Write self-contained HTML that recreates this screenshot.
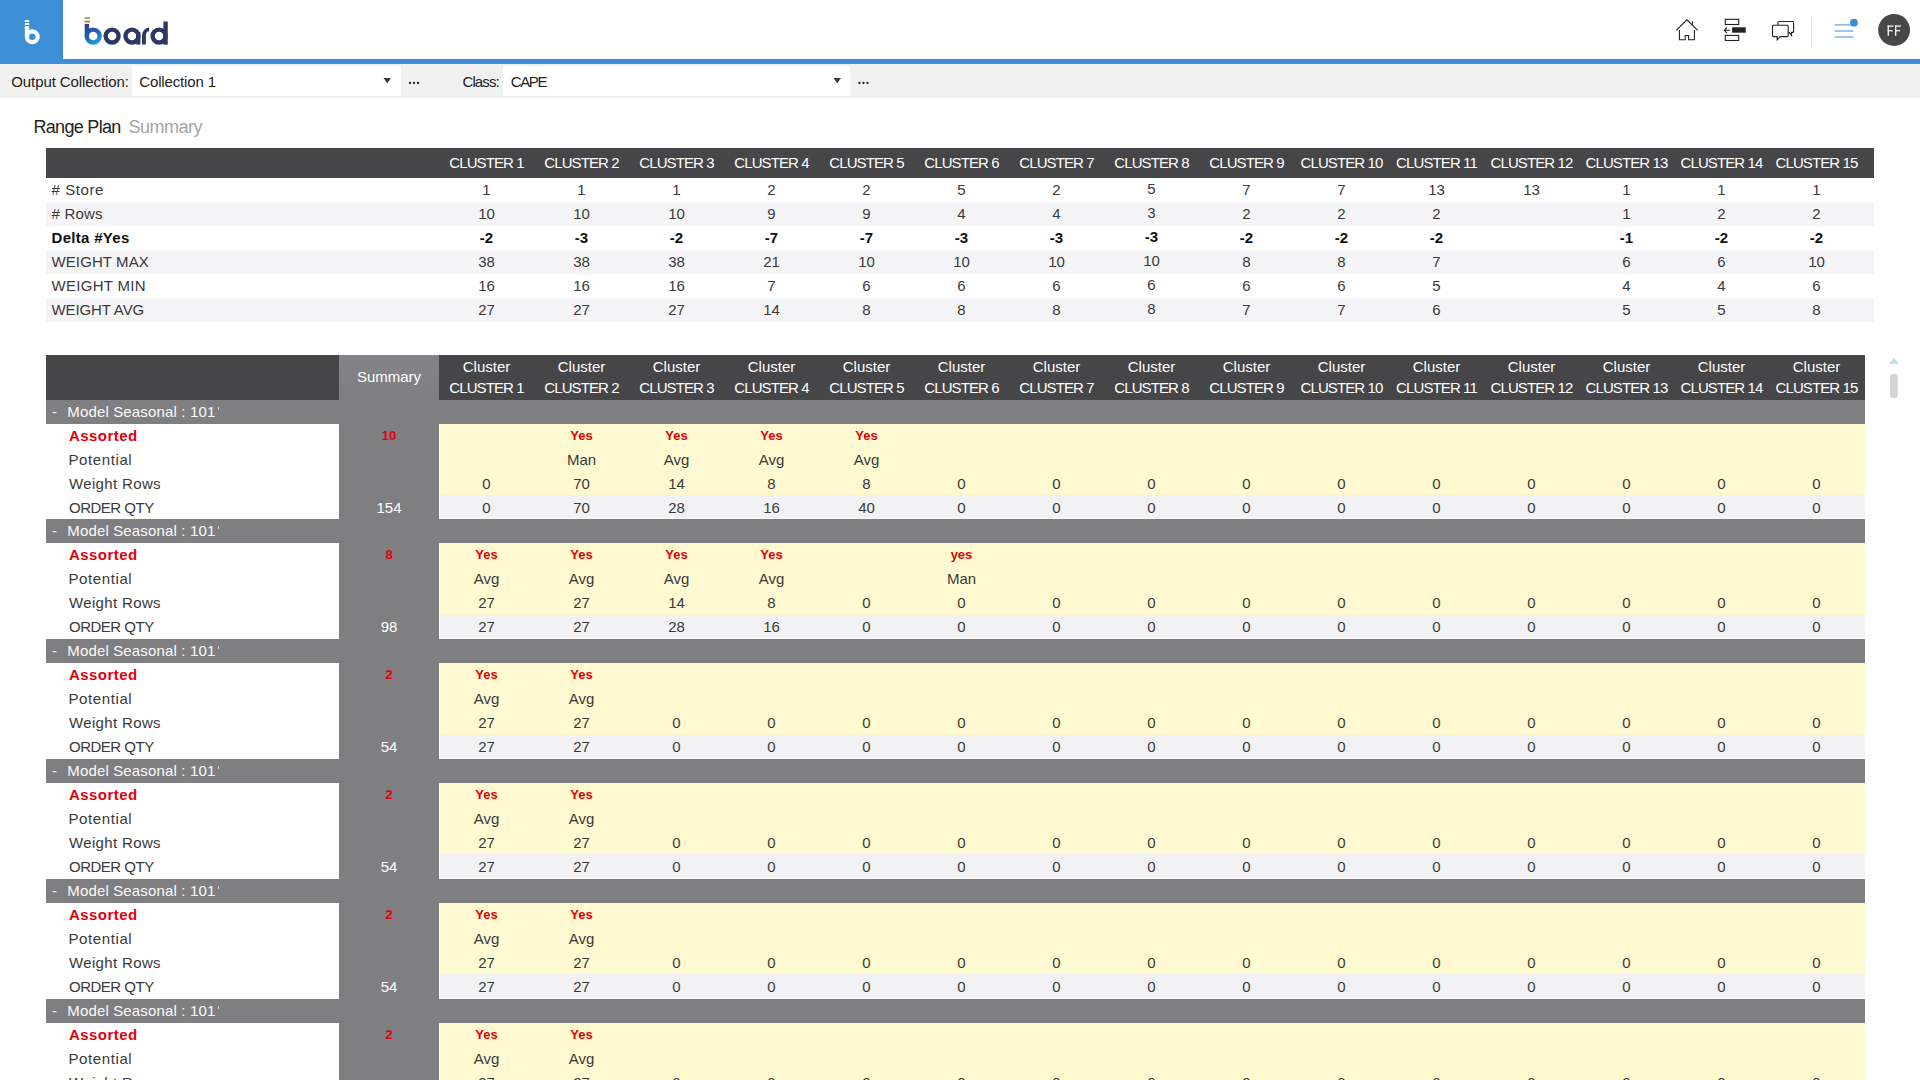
<!DOCTYPE html>
<html><head><meta charset="utf-8"><title>Range Plan Summary</title>
<style>
html,body{margin:0;padding:0;width:1920px;height:1080px;overflow:hidden;background:#fff;}
body{position:relative;font-family:"Liberation Sans", sans-serif;}
body>div,body>svg{position:absolute;box-sizing:border-box;}
.t{white-space:nowrap;}
</style></head><body>
<div style="left:0px;top:0px;width:1920px;height:59px;background:#ffffff;"></div><div style="left:0px;top:0px;width:63px;height:59px;background:#3d8fd5;"></div><div style="left:0px;top:59px;width:1920px;height:5px;background:#3d8fd5;"></div><svg style="left:0;top:0" width="63" height="59" viewBox="0 0 63 59">
<rect x="24.8" y="20" width="4.3" height="2" fill="#fff"/>
<rect x="24.8" y="23" width="4.3" height="2" fill="#fff"/>
<rect x="24.8" y="26" width="4.3" height="11" fill="#fff"/>
<circle cx="32.3" cy="36.8" r="5.4" fill="none" stroke="#fff" stroke-width="4.2"/>
</svg><svg style="left:60px;top:0" width="130" height="59" viewBox="60 0 130 59">
<defs><linearGradient id="bg1" gradientUnits="userSpaceOnUse" x1="86" y1="24" x2="99" y2="45"><stop offset="0" stop-color="#2b3a92"/><stop offset="0.55" stop-color="#2168b8"/><stop offset="1" stop-color="#1db6ec"/></linearGradient></defs>
<rect x="84.5" y="17.1" width="5.4" height="1.9" fill="#7fbc4f"/>
<rect x="84.5" y="20.6" width="5.4" height="1.9" fill="#e8624f"/>
<g fill="url(#bg1)"><rect x="84.7" y="23.9" width="4.4" height="12.3"/></g>
<circle cx="93.2" cy="36.1" r="6.45" fill="none" stroke="url(#bg1)" stroke-width="4.4"/>
<g fill="#2e3763">
<rect x="136.2" y="32" width="4.2" height="12.6"/>
<path d="M142 44.6 V36.1 A7.1 8.6 0 0 1 149.1 27.5 V31.3 A3.2 4.8 0 0 0 145.9 36.1 V44.6 Z"/>
<rect x="163.4" y="21.5" width="4.35" height="23.2"/>
</g>
<g fill="none" stroke="#2e3763" stroke-width="4.4">
<circle cx="112.1" cy="36.1" r="6.45"/>
<circle cx="131.95" cy="36.1" r="6.45"/>
<circle cx="159.05" cy="36.1" r="6.45"/>
</g>
</svg><svg style="left:1660px;top:0" width="260" height="59" viewBox="1660 0 260 59">
<g fill="none" stroke="#222" stroke-width="1.1">
<path d="M1676.3 30.4 L1686.9 19.8 L1697.7 30.4"/>
<path d="M1692.4 21.2 V24.8"/>
<path d="M1679.4 30 V39.8 H1685.2 V35.5 H1688.6 V39.8 H1694.4 V30"/>
<rect x="1725.3" y="19.3" width="13.4" height="5.2"/>
<rect x="1725.3" y="35.4" width="13.4" height="5.1"/>
<path d="M1724.5 30.3 H1730 M1727 27.5 L1724.3 30.3 L1727 33.1"/>
<path d="M1778 25 V22.5 Q1778 21.5 1779 21.5 H1792.6 Q1793.6 21.5 1793.6 22.5 V31.4 Q1793.6 32.4 1792.6 32.4 H1791.6 V35.5 L1789 32.4 H1788.2"/>
<path d="M1773.5 25.2 H1787.2 Q1788.2 25.2 1788.2 26.2 V35.6 Q1788.2 36.6 1787.2 36.6 H1780.2 L1777.2 39.8 V36.6 H1773.5 Q1772.5 36.6 1772.5 35.6 V26.2 Q1772.5 25.2 1773.5 25.2 Z"/>
</g>
<rect x="1732.1" y="27.3" width="13.6" height="5.4" fill="#222"/>
<rect x="1811" y="17.5" width="1" height="30.5" fill="#e2e2e2"/>
<g fill="#8fbde2"><rect x="1834.6" y="24" width="18.7" height="1.7"/><rect x="1834.6" y="30.2" width="18.7" height="1.7"/><rect x="1834.6" y="36.1" width="18.7" height="1.7"/></g>
<circle cx="1854" cy="22.7" r="3.9" fill="#3d8fd5"/>
<circle cx="1894.1" cy="30" r="15.9" fill="#474747"/>
</svg><svg style="left:1880px;top:20px" width="28" height="20" viewBox="1880 20 28 20"><g fill="#f4f4f4"><rect x="1887.6" y="25.4" width="1.35" height="10.4"/><rect x="1887.6" y="25.4" width="5.9" height="1.3"/><rect x="1887.6" y="30.1" width="5.2" height="1.25"/><rect x="1895" y="25.4" width="1.35" height="10.4"/><rect x="1895" y="25.4" width="5.9" height="1.3"/><rect x="1895" y="30.1" width="5.2" height="1.25"/></g></svg><div style="left:0px;top:64px;width:1920px;height:34px;background:#f1f1f2;"></div><div class="t" style="left:11.3px;top:70px;width:130px;height:24px;line-height:24px;font-size:15px;color:#222;font-weight:400;text-align:left;letter-spacing:-0.1px;">Output Collection:</div><div style="left:132px;top:66px;width:269px;height:30px;background:#ffffff;"></div><div class="t" style="left:139.3px;top:70px;width:200px;height:24px;line-height:24px;font-size:15px;color:#222;font-weight:400;text-align:left;letter-spacing:-0.15px;">Collection 1</div><svg style="left:383px;top:77px" width="9" height="7" viewBox="0 0 9 7"><path d="M0.5 1 H8 L4.25 6.3 Z" fill="#3a3a3a"/></svg><svg style="left:405px;top:78px" width="20" height="10" viewBox="405 78 20 10"><circle cx="410" cy="83" r="1.15" fill="#222"/><circle cx="414" cy="83" r="1.15" fill="#222"/><circle cx="418" cy="83" r="1.15" fill="#222"/></svg><div class="t" style="left:462.5px;top:70px;width:40px;height:24px;line-height:24px;font-size:15px;color:#222;font-weight:400;text-align:left;letter-spacing:-0.9px;">Class:</div><div style="left:503px;top:66px;width:347px;height:30px;background:#ffffff;"></div><div class="t" style="left:510.8px;top:70px;width:100px;height:24px;line-height:24px;font-size:15px;color:#222;font-weight:400;text-align:left;letter-spacing:-1.4px;">CAPE</div><svg style="left:833px;top:77px" width="9" height="7" viewBox="0 0 9 7"><path d="M0.5 1 H8 L4.25 6.3 Z" fill="#3a3a3a"/></svg><svg style="left:855px;top:78px" width="20" height="10" viewBox="855 78 20 10"><circle cx="859.5" cy="83" r="1.15" fill="#222"/><circle cx="863.5" cy="83" r="1.15" fill="#222"/><circle cx="867.5" cy="83" r="1.15" fill="#222"/></svg><div class="t" style="left:33.5px;top:114.5px;width:200px;height:24px;line-height:24px;font-size:18px;color:#222;font-weight:400;text-align:left;letter-spacing:-0.7px;">Range Plan</div><div class="t" style="left:128.5px;top:114.5px;width:200px;height:24px;line-height:24px;font-size:18px;color:#a5a5a5;font-weight:400;text-align:left;letter-spacing:-0.5px;">Summary</div><div style="left:46px;top:148px;width:1828px;height:30px;background:#464547;"></div><div class="t" style="left:439px;top:148px;width:95px;height:30px;line-height:30px;font-size:15px;color:#ffffff;font-weight:400;text-align:center;letter-spacing:-0.9px;">CLUSTER 1</div><div class="t" style="left:534px;top:148px;width:95px;height:30px;line-height:30px;font-size:15px;color:#ffffff;font-weight:400;text-align:center;letter-spacing:-0.9px;">CLUSTER 2</div><div class="t" style="left:629px;top:148px;width:95px;height:30px;line-height:30px;font-size:15px;color:#ffffff;font-weight:400;text-align:center;letter-spacing:-0.9px;">CLUSTER 3</div><div class="t" style="left:724px;top:148px;width:95px;height:30px;line-height:30px;font-size:15px;color:#ffffff;font-weight:400;text-align:center;letter-spacing:-0.9px;">CLUSTER 4</div><div class="t" style="left:819px;top:148px;width:95px;height:30px;line-height:30px;font-size:15px;color:#ffffff;font-weight:400;text-align:center;letter-spacing:-0.9px;">CLUSTER 5</div><div class="t" style="left:914px;top:148px;width:95px;height:30px;line-height:30px;font-size:15px;color:#ffffff;font-weight:400;text-align:center;letter-spacing:-0.9px;">CLUSTER 6</div><div class="t" style="left:1009px;top:148px;width:95px;height:30px;line-height:30px;font-size:15px;color:#ffffff;font-weight:400;text-align:center;letter-spacing:-0.9px;">CLUSTER 7</div><div class="t" style="left:1104px;top:148px;width:95px;height:30px;line-height:30px;font-size:15px;color:#ffffff;font-weight:400;text-align:center;letter-spacing:-0.9px;">CLUSTER 8</div><div class="t" style="left:1199px;top:148px;width:95px;height:30px;line-height:30px;font-size:15px;color:#ffffff;font-weight:400;text-align:center;letter-spacing:-0.9px;">CLUSTER 9</div><div class="t" style="left:1294px;top:148px;width:95px;height:30px;line-height:30px;font-size:15px;color:#ffffff;font-weight:400;text-align:center;letter-spacing:-0.9px;">CLUSTER 10</div><div class="t" style="left:1389px;top:148px;width:95px;height:30px;line-height:30px;font-size:15px;color:#ffffff;font-weight:400;text-align:center;letter-spacing:-0.9px;">CLUSTER 11</div><div class="t" style="left:1484px;top:148px;width:95px;height:30px;line-height:30px;font-size:15px;color:#ffffff;font-weight:400;text-align:center;letter-spacing:-0.9px;">CLUSTER 12</div><div class="t" style="left:1579px;top:148px;width:95px;height:30px;line-height:30px;font-size:15px;color:#ffffff;font-weight:400;text-align:center;letter-spacing:-0.9px;">CLUSTER 13</div><div class="t" style="left:1674px;top:148px;width:95px;height:30px;line-height:30px;font-size:15px;color:#ffffff;font-weight:400;text-align:center;letter-spacing:-0.9px;">CLUSTER 14</div><div class="t" style="left:1769px;top:148px;width:95px;height:30px;line-height:30px;font-size:15px;color:#ffffff;font-weight:400;text-align:center;letter-spacing:-0.9px;">CLUSTER 15</div><div class="t" style="left:51.5px;top:178px;width:300px;height:24px;line-height:24px;font-size:15px;color:#3a3a3a;font-weight:400;text-align:left;letter-spacing:0.6px;"># Store</div><div class="t" style="left:439px;top:178px;width:95px;height:24px;line-height:24px;font-size:15px;color:#3a3a3a;font-weight:400;text-align:center;">1</div><div class="t" style="left:534px;top:178px;width:95px;height:24px;line-height:24px;font-size:15px;color:#3a3a3a;font-weight:400;text-align:center;">1</div><div class="t" style="left:629px;top:178px;width:95px;height:24px;line-height:24px;font-size:15px;color:#3a3a3a;font-weight:400;text-align:center;">1</div><div class="t" style="left:724px;top:178px;width:95px;height:24px;line-height:24px;font-size:15px;color:#3a3a3a;font-weight:400;text-align:center;">2</div><div class="t" style="left:819px;top:178px;width:95px;height:24px;line-height:24px;font-size:15px;color:#3a3a3a;font-weight:400;text-align:center;">2</div><div class="t" style="left:914px;top:178px;width:95px;height:24px;line-height:24px;font-size:15px;color:#3a3a3a;font-weight:400;text-align:center;">5</div><div class="t" style="left:1009px;top:178px;width:95px;height:24px;line-height:24px;font-size:15px;color:#3a3a3a;font-weight:400;text-align:center;">2</div><div class="t" style="left:1104px;top:177px;width:95px;height:24px;line-height:24px;font-size:15px;color:#3a3a3a;font-weight:400;text-align:center;">5</div><div class="t" style="left:1199px;top:178px;width:95px;height:24px;line-height:24px;font-size:15px;color:#3a3a3a;font-weight:400;text-align:center;">7</div><div class="t" style="left:1294px;top:178px;width:95px;height:24px;line-height:24px;font-size:15px;color:#3a3a3a;font-weight:400;text-align:center;">7</div><div class="t" style="left:1389px;top:178px;width:95px;height:24px;line-height:24px;font-size:15px;color:#3a3a3a;font-weight:400;text-align:center;">13</div><div class="t" style="left:1484px;top:178px;width:95px;height:24px;line-height:24px;font-size:15px;color:#3a3a3a;font-weight:400;text-align:center;">13</div><div class="t" style="left:1579px;top:178px;width:95px;height:24px;line-height:24px;font-size:15px;color:#3a3a3a;font-weight:400;text-align:center;">1</div><div class="t" style="left:1674px;top:178px;width:95px;height:24px;line-height:24px;font-size:15px;color:#3a3a3a;font-weight:400;text-align:center;">1</div><div class="t" style="left:1769px;top:178px;width:95px;height:24px;line-height:24px;font-size:15px;color:#3a3a3a;font-weight:400;text-align:center;">1</div><div style="left:46px;top:202px;width:1828px;height:24px;background:#f5f5f7;"></div><div class="t" style="left:51.5px;top:202px;width:300px;height:24px;line-height:24px;font-size:15px;color:#3a3a3a;font-weight:400;text-align:left;letter-spacing:0.2px;"># Rows</div><div class="t" style="left:439px;top:202px;width:95px;height:24px;line-height:24px;font-size:15px;color:#3a3a3a;font-weight:400;text-align:center;">10</div><div class="t" style="left:534px;top:202px;width:95px;height:24px;line-height:24px;font-size:15px;color:#3a3a3a;font-weight:400;text-align:center;">10</div><div class="t" style="left:629px;top:202px;width:95px;height:24px;line-height:24px;font-size:15px;color:#3a3a3a;font-weight:400;text-align:center;">10</div><div class="t" style="left:724px;top:202px;width:95px;height:24px;line-height:24px;font-size:15px;color:#3a3a3a;font-weight:400;text-align:center;">9</div><div class="t" style="left:819px;top:202px;width:95px;height:24px;line-height:24px;font-size:15px;color:#3a3a3a;font-weight:400;text-align:center;">9</div><div class="t" style="left:914px;top:202px;width:95px;height:24px;line-height:24px;font-size:15px;color:#3a3a3a;font-weight:400;text-align:center;">4</div><div class="t" style="left:1009px;top:202px;width:95px;height:24px;line-height:24px;font-size:15px;color:#3a3a3a;font-weight:400;text-align:center;">4</div><div class="t" style="left:1104px;top:201px;width:95px;height:24px;line-height:24px;font-size:15px;color:#3a3a3a;font-weight:400;text-align:center;">3</div><div class="t" style="left:1199px;top:202px;width:95px;height:24px;line-height:24px;font-size:15px;color:#3a3a3a;font-weight:400;text-align:center;">2</div><div class="t" style="left:1294px;top:202px;width:95px;height:24px;line-height:24px;font-size:15px;color:#3a3a3a;font-weight:400;text-align:center;">2</div><div class="t" style="left:1389px;top:202px;width:95px;height:24px;line-height:24px;font-size:15px;color:#3a3a3a;font-weight:400;text-align:center;">2</div><div class="t" style="left:1579px;top:202px;width:95px;height:24px;line-height:24px;font-size:15px;color:#3a3a3a;font-weight:400;text-align:center;">1</div><div class="t" style="left:1674px;top:202px;width:95px;height:24px;line-height:24px;font-size:15px;color:#3a3a3a;font-weight:400;text-align:center;">2</div><div class="t" style="left:1769px;top:202px;width:95px;height:24px;line-height:24px;font-size:15px;color:#3a3a3a;font-weight:400;text-align:center;">2</div><div class="t" style="left:51.5px;top:226px;width:300px;height:24px;line-height:24px;font-size:15px;color:#111;font-weight:700;text-align:left;letter-spacing:0.3px;">Delta #Yes</div><div class="t" style="left:439px;top:226px;width:95px;height:24px;line-height:24px;font-size:15px;color:#111;font-weight:700;text-align:center;">-2</div><div class="t" style="left:534px;top:226px;width:95px;height:24px;line-height:24px;font-size:15px;color:#111;font-weight:700;text-align:center;">-3</div><div class="t" style="left:629px;top:226px;width:95px;height:24px;line-height:24px;font-size:15px;color:#111;font-weight:700;text-align:center;">-2</div><div class="t" style="left:724px;top:226px;width:95px;height:24px;line-height:24px;font-size:15px;color:#111;font-weight:700;text-align:center;">-7</div><div class="t" style="left:819px;top:226px;width:95px;height:24px;line-height:24px;font-size:15px;color:#111;font-weight:700;text-align:center;">-7</div><div class="t" style="left:914px;top:226px;width:95px;height:24px;line-height:24px;font-size:15px;color:#111;font-weight:700;text-align:center;">-3</div><div class="t" style="left:1009px;top:226px;width:95px;height:24px;line-height:24px;font-size:15px;color:#111;font-weight:700;text-align:center;">-3</div><div class="t" style="left:1104px;top:225px;width:95px;height:24px;line-height:24px;font-size:15px;color:#111;font-weight:700;text-align:center;">-3</div><div class="t" style="left:1199px;top:226px;width:95px;height:24px;line-height:24px;font-size:15px;color:#111;font-weight:700;text-align:center;">-2</div><div class="t" style="left:1294px;top:226px;width:95px;height:24px;line-height:24px;font-size:15px;color:#111;font-weight:700;text-align:center;">-2</div><div class="t" style="left:1389px;top:226px;width:95px;height:24px;line-height:24px;font-size:15px;color:#111;font-weight:700;text-align:center;">-2</div><div class="t" style="left:1579px;top:226px;width:95px;height:24px;line-height:24px;font-size:15px;color:#111;font-weight:700;text-align:center;">-1</div><div class="t" style="left:1674px;top:226px;width:95px;height:24px;line-height:24px;font-size:15px;color:#111;font-weight:700;text-align:center;">-2</div><div class="t" style="left:1769px;top:226px;width:95px;height:24px;line-height:24px;font-size:15px;color:#111;font-weight:700;text-align:center;">-2</div><div style="left:46px;top:250px;width:1828px;height:24px;background:#f5f5f7;"></div><div class="t" style="left:51.5px;top:250px;width:300px;height:24px;line-height:24px;font-size:15px;color:#3a3a3a;font-weight:400;text-align:left;letter-spacing:0.1px;">WEIGHT MAX</div><div class="t" style="left:439px;top:250px;width:95px;height:24px;line-height:24px;font-size:15px;color:#3a3a3a;font-weight:400;text-align:center;">38</div><div class="t" style="left:534px;top:250px;width:95px;height:24px;line-height:24px;font-size:15px;color:#3a3a3a;font-weight:400;text-align:center;">38</div><div class="t" style="left:629px;top:250px;width:95px;height:24px;line-height:24px;font-size:15px;color:#3a3a3a;font-weight:400;text-align:center;">38</div><div class="t" style="left:724px;top:250px;width:95px;height:24px;line-height:24px;font-size:15px;color:#3a3a3a;font-weight:400;text-align:center;">21</div><div class="t" style="left:819px;top:250px;width:95px;height:24px;line-height:24px;font-size:15px;color:#3a3a3a;font-weight:400;text-align:center;">10</div><div class="t" style="left:914px;top:250px;width:95px;height:24px;line-height:24px;font-size:15px;color:#3a3a3a;font-weight:400;text-align:center;">10</div><div class="t" style="left:1009px;top:250px;width:95px;height:24px;line-height:24px;font-size:15px;color:#3a3a3a;font-weight:400;text-align:center;">10</div><div class="t" style="left:1104px;top:249px;width:95px;height:24px;line-height:24px;font-size:15px;color:#3a3a3a;font-weight:400;text-align:center;">10</div><div class="t" style="left:1199px;top:250px;width:95px;height:24px;line-height:24px;font-size:15px;color:#3a3a3a;font-weight:400;text-align:center;">8</div><div class="t" style="left:1294px;top:250px;width:95px;height:24px;line-height:24px;font-size:15px;color:#3a3a3a;font-weight:400;text-align:center;">8</div><div class="t" style="left:1389px;top:250px;width:95px;height:24px;line-height:24px;font-size:15px;color:#3a3a3a;font-weight:400;text-align:center;">7</div><div class="t" style="left:1579px;top:250px;width:95px;height:24px;line-height:24px;font-size:15px;color:#3a3a3a;font-weight:400;text-align:center;">6</div><div class="t" style="left:1674px;top:250px;width:95px;height:24px;line-height:24px;font-size:15px;color:#3a3a3a;font-weight:400;text-align:center;">6</div><div class="t" style="left:1769px;top:250px;width:95px;height:24px;line-height:24px;font-size:15px;color:#3a3a3a;font-weight:400;text-align:center;">10</div><div class="t" style="left:51.5px;top:274px;width:300px;height:24px;line-height:24px;font-size:15px;color:#3a3a3a;font-weight:400;text-align:left;letter-spacing:0.3px;">WEIGHT MIN</div><div class="t" style="left:439px;top:274px;width:95px;height:24px;line-height:24px;font-size:15px;color:#3a3a3a;font-weight:400;text-align:center;">16</div><div class="t" style="left:534px;top:274px;width:95px;height:24px;line-height:24px;font-size:15px;color:#3a3a3a;font-weight:400;text-align:center;">16</div><div class="t" style="left:629px;top:274px;width:95px;height:24px;line-height:24px;font-size:15px;color:#3a3a3a;font-weight:400;text-align:center;">16</div><div class="t" style="left:724px;top:274px;width:95px;height:24px;line-height:24px;font-size:15px;color:#3a3a3a;font-weight:400;text-align:center;">7</div><div class="t" style="left:819px;top:274px;width:95px;height:24px;line-height:24px;font-size:15px;color:#3a3a3a;font-weight:400;text-align:center;">6</div><div class="t" style="left:914px;top:274px;width:95px;height:24px;line-height:24px;font-size:15px;color:#3a3a3a;font-weight:400;text-align:center;">6</div><div class="t" style="left:1009px;top:274px;width:95px;height:24px;line-height:24px;font-size:15px;color:#3a3a3a;font-weight:400;text-align:center;">6</div><div class="t" style="left:1104px;top:273px;width:95px;height:24px;line-height:24px;font-size:15px;color:#3a3a3a;font-weight:400;text-align:center;">6</div><div class="t" style="left:1199px;top:274px;width:95px;height:24px;line-height:24px;font-size:15px;color:#3a3a3a;font-weight:400;text-align:center;">6</div><div class="t" style="left:1294px;top:274px;width:95px;height:24px;line-height:24px;font-size:15px;color:#3a3a3a;font-weight:400;text-align:center;">6</div><div class="t" style="left:1389px;top:274px;width:95px;height:24px;line-height:24px;font-size:15px;color:#3a3a3a;font-weight:400;text-align:center;">5</div><div class="t" style="left:1579px;top:274px;width:95px;height:24px;line-height:24px;font-size:15px;color:#3a3a3a;font-weight:400;text-align:center;">4</div><div class="t" style="left:1674px;top:274px;width:95px;height:24px;line-height:24px;font-size:15px;color:#3a3a3a;font-weight:400;text-align:center;">4</div><div class="t" style="left:1769px;top:274px;width:95px;height:24px;line-height:24px;font-size:15px;color:#3a3a3a;font-weight:400;text-align:center;">6</div><div style="left:46px;top:298px;width:1828px;height:24px;background:#f5f5f7;"></div><div class="t" style="left:51.5px;top:298px;width:300px;height:24px;line-height:24px;font-size:15px;color:#3a3a3a;font-weight:400;text-align:left;letter-spacing:-0.1px;">WEIGHT AVG</div><div class="t" style="left:439px;top:298px;width:95px;height:24px;line-height:24px;font-size:15px;color:#3a3a3a;font-weight:400;text-align:center;">27</div><div class="t" style="left:534px;top:298px;width:95px;height:24px;line-height:24px;font-size:15px;color:#3a3a3a;font-weight:400;text-align:center;">27</div><div class="t" style="left:629px;top:298px;width:95px;height:24px;line-height:24px;font-size:15px;color:#3a3a3a;font-weight:400;text-align:center;">27</div><div class="t" style="left:724px;top:298px;width:95px;height:24px;line-height:24px;font-size:15px;color:#3a3a3a;font-weight:400;text-align:center;">14</div><div class="t" style="left:819px;top:298px;width:95px;height:24px;line-height:24px;font-size:15px;color:#3a3a3a;font-weight:400;text-align:center;">8</div><div class="t" style="left:914px;top:298px;width:95px;height:24px;line-height:24px;font-size:15px;color:#3a3a3a;font-weight:400;text-align:center;">8</div><div class="t" style="left:1009px;top:298px;width:95px;height:24px;line-height:24px;font-size:15px;color:#3a3a3a;font-weight:400;text-align:center;">8</div><div class="t" style="left:1104px;top:297px;width:95px;height:24px;line-height:24px;font-size:15px;color:#3a3a3a;font-weight:400;text-align:center;">8</div><div class="t" style="left:1199px;top:298px;width:95px;height:24px;line-height:24px;font-size:15px;color:#3a3a3a;font-weight:400;text-align:center;">7</div><div class="t" style="left:1294px;top:298px;width:95px;height:24px;line-height:24px;font-size:15px;color:#3a3a3a;font-weight:400;text-align:center;">7</div><div class="t" style="left:1389px;top:298px;width:95px;height:24px;line-height:24px;font-size:15px;color:#3a3a3a;font-weight:400;text-align:center;">6</div><div class="t" style="left:1579px;top:298px;width:95px;height:24px;line-height:24px;font-size:15px;color:#3a3a3a;font-weight:400;text-align:center;">5</div><div class="t" style="left:1674px;top:298px;width:95px;height:24px;line-height:24px;font-size:15px;color:#3a3a3a;font-weight:400;text-align:center;">5</div><div class="t" style="left:1769px;top:298px;width:95px;height:24px;line-height:24px;font-size:15px;color:#3a3a3a;font-weight:400;text-align:center;">8</div><div style="left:46px;top:355px;width:1819px;height:45px;background:#464547;"></div><div style="left:339px;top:355px;width:100px;height:725px;background:#7f7e81;"></div><div style="left:339px;top:355px;width:100px;height:45px;background:linear-gradient(#858488,#7e7d81);"></div><div class="t" style="left:339px;top:354px;width:100px;height:45px;line-height:45px;font-size:15px;color:#ffffff;font-weight:400;text-align:center;">Summary</div><div class="t" style="left:439px;top:356px;width:95px;height:42px;line-height:21px;font-size:15px;color:#fff;text-align:center;"><span>Cluster</span><br><span style="letter-spacing:-0.9px">CLUSTER 1</span></div><div class="t" style="left:534px;top:356px;width:95px;height:42px;line-height:21px;font-size:15px;color:#fff;text-align:center;"><span>Cluster</span><br><span style="letter-spacing:-0.9px">CLUSTER 2</span></div><div class="t" style="left:629px;top:356px;width:95px;height:42px;line-height:21px;font-size:15px;color:#fff;text-align:center;"><span>Cluster</span><br><span style="letter-spacing:-0.9px">CLUSTER 3</span></div><div class="t" style="left:724px;top:356px;width:95px;height:42px;line-height:21px;font-size:15px;color:#fff;text-align:center;"><span>Cluster</span><br><span style="letter-spacing:-0.9px">CLUSTER 4</span></div><div class="t" style="left:819px;top:356px;width:95px;height:42px;line-height:21px;font-size:15px;color:#fff;text-align:center;"><span>Cluster</span><br><span style="letter-spacing:-0.9px">CLUSTER 5</span></div><div class="t" style="left:914px;top:356px;width:95px;height:42px;line-height:21px;font-size:15px;color:#fff;text-align:center;"><span>Cluster</span><br><span style="letter-spacing:-0.9px">CLUSTER 6</span></div><div class="t" style="left:1009px;top:356px;width:95px;height:42px;line-height:21px;font-size:15px;color:#fff;text-align:center;"><span>Cluster</span><br><span style="letter-spacing:-0.9px">CLUSTER 7</span></div><div class="t" style="left:1104px;top:356px;width:95px;height:42px;line-height:21px;font-size:15px;color:#fff;text-align:center;"><span>Cluster</span><br><span style="letter-spacing:-0.9px">CLUSTER 8</span></div><div class="t" style="left:1199px;top:356px;width:95px;height:42px;line-height:21px;font-size:15px;color:#fff;text-align:center;"><span>Cluster</span><br><span style="letter-spacing:-0.9px">CLUSTER 9</span></div><div class="t" style="left:1294px;top:356px;width:95px;height:42px;line-height:21px;font-size:15px;color:#fff;text-align:center;"><span>Cluster</span><br><span style="letter-spacing:-0.9px">CLUSTER 10</span></div><div class="t" style="left:1389px;top:356px;width:95px;height:42px;line-height:21px;font-size:15px;color:#fff;text-align:center;"><span>Cluster</span><br><span style="letter-spacing:-0.9px">CLUSTER 11</span></div><div class="t" style="left:1484px;top:356px;width:95px;height:42px;line-height:21px;font-size:15px;color:#fff;text-align:center;"><span>Cluster</span><br><span style="letter-spacing:-0.9px">CLUSTER 12</span></div><div class="t" style="left:1579px;top:356px;width:95px;height:42px;line-height:21px;font-size:15px;color:#fff;text-align:center;"><span>Cluster</span><br><span style="letter-spacing:-0.9px">CLUSTER 13</span></div><div class="t" style="left:1674px;top:356px;width:95px;height:42px;line-height:21px;font-size:15px;color:#fff;text-align:center;"><span>Cluster</span><br><span style="letter-spacing:-0.9px">CLUSTER 14</span></div><div class="t" style="left:1769px;top:356px;width:95px;height:42px;line-height:21px;font-size:15px;color:#fff;text-align:center;"><span>Cluster</span><br><span style="letter-spacing:-0.9px">CLUSTER 15</span></div><div style="left:46px;top:400px;width:1819px;height:24px;background:#7f7e81;"></div><div class="t" style="left:52px;top:400px;width:300px;height:24px;line-height:24px;font-size:15px;color:#f4f4f4;font-weight:400;text-align:left;">-</div><div class="t" style="left:67.3px;top:400px;width:160px;height:24px;line-height:24px;font-size:15px;color:#fafafa;font-weight:400;text-align:left;letter-spacing:0.15px;">Model Seasonal : 101</div><div style="left:218.3px;top:406.5px;width:1.2px;height:3px;background:rgba(244,244,244,0.7);"></div><div style="left:46px;top:424px;width:293px;height:95px;background:#ffffff;"></div><div style="left:339px;top:424px;width:100px;height:95px;background:#7f7e81;"></div><div style="left:439px;top:424px;width:1426px;height:71px;background:#fef9d1;"></div><div style="left:439px;top:495px;width:1426px;height:24px;background:#f2f1f4;"></div><div style="left:439px;top:424px;width:1px;height:95px;background:#ffffff;"></div><div style="left:439px;top:518px;width:1426px;height:1px;background:#fbfbfc;"></div><div class="t" style="left:69.0px;top:424px;width:260px;height:24px;line-height:24px;font-size:15px;color:#e1000b;font-weight:700;text-align:left;letter-spacing:0.45px;">Assorted</div><div class="t" style="left:68.5px;top:448px;width:260px;height:24px;line-height:24px;font-size:15px;color:#3a3a3a;font-weight:400;text-align:left;letter-spacing:0.6px;">Potential</div><div class="t" style="left:69.0px;top:472px;width:260px;height:24px;line-height:24px;font-size:15px;color:#3a3a3a;font-weight:400;text-align:left;letter-spacing:0.35px;">Weight Rows</div><div class="t" style="left:69.0px;top:496px;width:260px;height:24px;line-height:24px;font-size:15px;color:#3a3a3a;font-weight:400;text-align:left;letter-spacing:-0.5px;">ORDER QTY</div><div class="t" style="left:339px;top:424px;width:100px;height:24px;line-height:24px;font-size:13px;color:#e1000b;font-weight:700;text-align:center;">10</div><div class="t" style="left:339px;top:496px;width:100px;height:24px;line-height:24px;font-size:15px;color:#ffffff;font-weight:400;text-align:center;">154</div><div class="t" style="left:439px;top:472px;width:95px;height:24px;line-height:24px;font-size:15px;color:#3a3a3a;font-weight:400;text-align:center;">0</div><div class="t" style="left:439px;top:496px;width:95px;height:24px;line-height:24px;font-size:15px;color:#3a3a3a;font-weight:400;text-align:center;">0</div><div class="t" style="left:534px;top:424px;width:95px;height:24px;line-height:24px;font-size:13px;color:#e1000b;font-weight:700;text-align:center;">Yes</div><div class="t" style="left:534px;top:448px;width:95px;height:24px;line-height:24px;font-size:15px;color:#3a3a3a;font-weight:400;text-align:center;">Man</div><div class="t" style="left:534px;top:472px;width:95px;height:24px;line-height:24px;font-size:15px;color:#3a3a3a;font-weight:400;text-align:center;">70</div><div class="t" style="left:534px;top:496px;width:95px;height:24px;line-height:24px;font-size:15px;color:#3a3a3a;font-weight:400;text-align:center;">70</div><div class="t" style="left:629px;top:424px;width:95px;height:24px;line-height:24px;font-size:13px;color:#e1000b;font-weight:700;text-align:center;">Yes</div><div class="t" style="left:629px;top:448px;width:95px;height:24px;line-height:24px;font-size:15px;color:#3a3a3a;font-weight:400;text-align:center;">Avg</div><div class="t" style="left:629px;top:472px;width:95px;height:24px;line-height:24px;font-size:15px;color:#3a3a3a;font-weight:400;text-align:center;">14</div><div class="t" style="left:629px;top:496px;width:95px;height:24px;line-height:24px;font-size:15px;color:#3a3a3a;font-weight:400;text-align:center;">28</div><div class="t" style="left:724px;top:424px;width:95px;height:24px;line-height:24px;font-size:13px;color:#e1000b;font-weight:700;text-align:center;">Yes</div><div class="t" style="left:724px;top:448px;width:95px;height:24px;line-height:24px;font-size:15px;color:#3a3a3a;font-weight:400;text-align:center;">Avg</div><div class="t" style="left:724px;top:472px;width:95px;height:24px;line-height:24px;font-size:15px;color:#3a3a3a;font-weight:400;text-align:center;">8</div><div class="t" style="left:724px;top:496px;width:95px;height:24px;line-height:24px;font-size:15px;color:#3a3a3a;font-weight:400;text-align:center;">16</div><div class="t" style="left:819px;top:424px;width:95px;height:24px;line-height:24px;font-size:13px;color:#e1000b;font-weight:700;text-align:center;">Yes</div><div class="t" style="left:819px;top:448px;width:95px;height:24px;line-height:24px;font-size:15px;color:#3a3a3a;font-weight:400;text-align:center;">Avg</div><div class="t" style="left:819px;top:472px;width:95px;height:24px;line-height:24px;font-size:15px;color:#3a3a3a;font-weight:400;text-align:center;">8</div><div class="t" style="left:819px;top:496px;width:95px;height:24px;line-height:24px;font-size:15px;color:#3a3a3a;font-weight:400;text-align:center;">40</div><div class="t" style="left:914px;top:472px;width:95px;height:24px;line-height:24px;font-size:15px;color:#3a3a3a;font-weight:400;text-align:center;">0</div><div class="t" style="left:914px;top:496px;width:95px;height:24px;line-height:24px;font-size:15px;color:#3a3a3a;font-weight:400;text-align:center;">0</div><div class="t" style="left:1009px;top:472px;width:95px;height:24px;line-height:24px;font-size:15px;color:#3a3a3a;font-weight:400;text-align:center;">0</div><div class="t" style="left:1009px;top:496px;width:95px;height:24px;line-height:24px;font-size:15px;color:#3a3a3a;font-weight:400;text-align:center;">0</div><div class="t" style="left:1104px;top:472px;width:95px;height:24px;line-height:24px;font-size:15px;color:#3a3a3a;font-weight:400;text-align:center;">0</div><div class="t" style="left:1104px;top:496px;width:95px;height:24px;line-height:24px;font-size:15px;color:#3a3a3a;font-weight:400;text-align:center;">0</div><div class="t" style="left:1199px;top:472px;width:95px;height:24px;line-height:24px;font-size:15px;color:#3a3a3a;font-weight:400;text-align:center;">0</div><div class="t" style="left:1199px;top:496px;width:95px;height:24px;line-height:24px;font-size:15px;color:#3a3a3a;font-weight:400;text-align:center;">0</div><div class="t" style="left:1294px;top:472px;width:95px;height:24px;line-height:24px;font-size:15px;color:#3a3a3a;font-weight:400;text-align:center;">0</div><div class="t" style="left:1294px;top:496px;width:95px;height:24px;line-height:24px;font-size:15px;color:#3a3a3a;font-weight:400;text-align:center;">0</div><div class="t" style="left:1389px;top:472px;width:95px;height:24px;line-height:24px;font-size:15px;color:#3a3a3a;font-weight:400;text-align:center;">0</div><div class="t" style="left:1389px;top:496px;width:95px;height:24px;line-height:24px;font-size:15px;color:#3a3a3a;font-weight:400;text-align:center;">0</div><div class="t" style="left:1484px;top:472px;width:95px;height:24px;line-height:24px;font-size:15px;color:#3a3a3a;font-weight:400;text-align:center;">0</div><div class="t" style="left:1484px;top:496px;width:95px;height:24px;line-height:24px;font-size:15px;color:#3a3a3a;font-weight:400;text-align:center;">0</div><div class="t" style="left:1579px;top:472px;width:95px;height:24px;line-height:24px;font-size:15px;color:#3a3a3a;font-weight:400;text-align:center;">0</div><div class="t" style="left:1579px;top:496px;width:95px;height:24px;line-height:24px;font-size:15px;color:#3a3a3a;font-weight:400;text-align:center;">0</div><div class="t" style="left:1674px;top:472px;width:95px;height:24px;line-height:24px;font-size:15px;color:#3a3a3a;font-weight:400;text-align:center;">0</div><div class="t" style="left:1674px;top:496px;width:95px;height:24px;line-height:24px;font-size:15px;color:#3a3a3a;font-weight:400;text-align:center;">0</div><div class="t" style="left:1769px;top:472px;width:95px;height:24px;line-height:24px;font-size:15px;color:#3a3a3a;font-weight:400;text-align:center;">0</div><div class="t" style="left:1769px;top:496px;width:95px;height:24px;line-height:24px;font-size:15px;color:#3a3a3a;font-weight:400;text-align:center;">0</div><div style="left:46px;top:519px;width:1819px;height:24px;background:#7f7e81;"></div><div class="t" style="left:52px;top:519px;width:300px;height:24px;line-height:24px;font-size:15px;color:#f4f4f4;font-weight:400;text-align:left;">-</div><div class="t" style="left:67.3px;top:519px;width:160px;height:24px;line-height:24px;font-size:15px;color:#fafafa;font-weight:400;text-align:left;letter-spacing:0.15px;">Model Seasonal : 101</div><div style="left:218.3px;top:525.5px;width:1.2px;height:3px;background:rgba(244,244,244,0.7);"></div><div style="left:46px;top:543px;width:293px;height:96px;background:#ffffff;"></div><div style="left:339px;top:543px;width:100px;height:96px;background:#7f7e81;"></div><div style="left:439px;top:543px;width:1426px;height:72px;background:#fef9d1;"></div><div style="left:439px;top:615px;width:1426px;height:24px;background:#f2f1f4;"></div><div style="left:439px;top:543px;width:1px;height:96px;background:#ffffff;"></div><div style="left:439px;top:638px;width:1426px;height:1px;background:#fbfbfc;"></div><div class="t" style="left:69.0px;top:543px;width:260px;height:24px;line-height:24px;font-size:15px;color:#e1000b;font-weight:700;text-align:left;letter-spacing:0.45px;">Assorted</div><div class="t" style="left:68.5px;top:567px;width:260px;height:24px;line-height:24px;font-size:15px;color:#3a3a3a;font-weight:400;text-align:left;letter-spacing:0.6px;">Potential</div><div class="t" style="left:69.0px;top:591px;width:260px;height:24px;line-height:24px;font-size:15px;color:#3a3a3a;font-weight:400;text-align:left;letter-spacing:0.35px;">Weight Rows</div><div class="t" style="left:69.0px;top:615px;width:260px;height:24px;line-height:24px;font-size:15px;color:#3a3a3a;font-weight:400;text-align:left;letter-spacing:-0.5px;">ORDER QTY</div><div class="t" style="left:339px;top:543px;width:100px;height:24px;line-height:24px;font-size:13px;color:#e1000b;font-weight:700;text-align:center;">8</div><div class="t" style="left:339px;top:615px;width:100px;height:24px;line-height:24px;font-size:15px;color:#ffffff;font-weight:400;text-align:center;">98</div><div class="t" style="left:439px;top:543px;width:95px;height:24px;line-height:24px;font-size:13px;color:#e1000b;font-weight:700;text-align:center;">Yes</div><div class="t" style="left:439px;top:567px;width:95px;height:24px;line-height:24px;font-size:15px;color:#3a3a3a;font-weight:400;text-align:center;">Avg</div><div class="t" style="left:439px;top:591px;width:95px;height:24px;line-height:24px;font-size:15px;color:#3a3a3a;font-weight:400;text-align:center;">27</div><div class="t" style="left:439px;top:615px;width:95px;height:24px;line-height:24px;font-size:15px;color:#3a3a3a;font-weight:400;text-align:center;">27</div><div class="t" style="left:534px;top:543px;width:95px;height:24px;line-height:24px;font-size:13px;color:#e1000b;font-weight:700;text-align:center;">Yes</div><div class="t" style="left:534px;top:567px;width:95px;height:24px;line-height:24px;font-size:15px;color:#3a3a3a;font-weight:400;text-align:center;">Avg</div><div class="t" style="left:534px;top:591px;width:95px;height:24px;line-height:24px;font-size:15px;color:#3a3a3a;font-weight:400;text-align:center;">27</div><div class="t" style="left:534px;top:615px;width:95px;height:24px;line-height:24px;font-size:15px;color:#3a3a3a;font-weight:400;text-align:center;">27</div><div class="t" style="left:629px;top:543px;width:95px;height:24px;line-height:24px;font-size:13px;color:#e1000b;font-weight:700;text-align:center;">Yes</div><div class="t" style="left:629px;top:567px;width:95px;height:24px;line-height:24px;font-size:15px;color:#3a3a3a;font-weight:400;text-align:center;">Avg</div><div class="t" style="left:629px;top:591px;width:95px;height:24px;line-height:24px;font-size:15px;color:#3a3a3a;font-weight:400;text-align:center;">14</div><div class="t" style="left:629px;top:615px;width:95px;height:24px;line-height:24px;font-size:15px;color:#3a3a3a;font-weight:400;text-align:center;">28</div><div class="t" style="left:724px;top:543px;width:95px;height:24px;line-height:24px;font-size:13px;color:#e1000b;font-weight:700;text-align:center;">Yes</div><div class="t" style="left:724px;top:567px;width:95px;height:24px;line-height:24px;font-size:15px;color:#3a3a3a;font-weight:400;text-align:center;">Avg</div><div class="t" style="left:724px;top:591px;width:95px;height:24px;line-height:24px;font-size:15px;color:#3a3a3a;font-weight:400;text-align:center;">8</div><div class="t" style="left:724px;top:615px;width:95px;height:24px;line-height:24px;font-size:15px;color:#3a3a3a;font-weight:400;text-align:center;">16</div><div class="t" style="left:819px;top:591px;width:95px;height:24px;line-height:24px;font-size:15px;color:#3a3a3a;font-weight:400;text-align:center;">0</div><div class="t" style="left:819px;top:615px;width:95px;height:24px;line-height:24px;font-size:15px;color:#3a3a3a;font-weight:400;text-align:center;">0</div><div class="t" style="left:914px;top:543px;width:95px;height:24px;line-height:24px;font-size:13px;color:#e1000b;font-weight:700;text-align:center;">yes</div><div class="t" style="left:914px;top:567px;width:95px;height:24px;line-height:24px;font-size:15px;color:#3a3a3a;font-weight:400;text-align:center;">Man</div><div class="t" style="left:914px;top:591px;width:95px;height:24px;line-height:24px;font-size:15px;color:#3a3a3a;font-weight:400;text-align:center;">0</div><div class="t" style="left:914px;top:615px;width:95px;height:24px;line-height:24px;font-size:15px;color:#3a3a3a;font-weight:400;text-align:center;">0</div><div class="t" style="left:1009px;top:591px;width:95px;height:24px;line-height:24px;font-size:15px;color:#3a3a3a;font-weight:400;text-align:center;">0</div><div class="t" style="left:1009px;top:615px;width:95px;height:24px;line-height:24px;font-size:15px;color:#3a3a3a;font-weight:400;text-align:center;">0</div><div class="t" style="left:1104px;top:591px;width:95px;height:24px;line-height:24px;font-size:15px;color:#3a3a3a;font-weight:400;text-align:center;">0</div><div class="t" style="left:1104px;top:615px;width:95px;height:24px;line-height:24px;font-size:15px;color:#3a3a3a;font-weight:400;text-align:center;">0</div><div class="t" style="left:1199px;top:591px;width:95px;height:24px;line-height:24px;font-size:15px;color:#3a3a3a;font-weight:400;text-align:center;">0</div><div class="t" style="left:1199px;top:615px;width:95px;height:24px;line-height:24px;font-size:15px;color:#3a3a3a;font-weight:400;text-align:center;">0</div><div class="t" style="left:1294px;top:591px;width:95px;height:24px;line-height:24px;font-size:15px;color:#3a3a3a;font-weight:400;text-align:center;">0</div><div class="t" style="left:1294px;top:615px;width:95px;height:24px;line-height:24px;font-size:15px;color:#3a3a3a;font-weight:400;text-align:center;">0</div><div class="t" style="left:1389px;top:591px;width:95px;height:24px;line-height:24px;font-size:15px;color:#3a3a3a;font-weight:400;text-align:center;">0</div><div class="t" style="left:1389px;top:615px;width:95px;height:24px;line-height:24px;font-size:15px;color:#3a3a3a;font-weight:400;text-align:center;">0</div><div class="t" style="left:1484px;top:591px;width:95px;height:24px;line-height:24px;font-size:15px;color:#3a3a3a;font-weight:400;text-align:center;">0</div><div class="t" style="left:1484px;top:615px;width:95px;height:24px;line-height:24px;font-size:15px;color:#3a3a3a;font-weight:400;text-align:center;">0</div><div class="t" style="left:1579px;top:591px;width:95px;height:24px;line-height:24px;font-size:15px;color:#3a3a3a;font-weight:400;text-align:center;">0</div><div class="t" style="left:1579px;top:615px;width:95px;height:24px;line-height:24px;font-size:15px;color:#3a3a3a;font-weight:400;text-align:center;">0</div><div class="t" style="left:1674px;top:591px;width:95px;height:24px;line-height:24px;font-size:15px;color:#3a3a3a;font-weight:400;text-align:center;">0</div><div class="t" style="left:1674px;top:615px;width:95px;height:24px;line-height:24px;font-size:15px;color:#3a3a3a;font-weight:400;text-align:center;">0</div><div class="t" style="left:1769px;top:591px;width:95px;height:24px;line-height:24px;font-size:15px;color:#3a3a3a;font-weight:400;text-align:center;">0</div><div class="t" style="left:1769px;top:615px;width:95px;height:24px;line-height:24px;font-size:15px;color:#3a3a3a;font-weight:400;text-align:center;">0</div><div style="left:46px;top:639px;width:1819px;height:24px;background:#7f7e81;"></div><div class="t" style="left:52px;top:639px;width:300px;height:24px;line-height:24px;font-size:15px;color:#f4f4f4;font-weight:400;text-align:left;">-</div><div class="t" style="left:67.3px;top:639px;width:160px;height:24px;line-height:24px;font-size:15px;color:#fafafa;font-weight:400;text-align:left;letter-spacing:0.15px;">Model Seasonal : 101</div><div style="left:218.3px;top:645.5px;width:1.2px;height:3px;background:rgba(244,244,244,0.7);"></div><div style="left:46px;top:663px;width:293px;height:96px;background:#ffffff;"></div><div style="left:339px;top:663px;width:100px;height:96px;background:#7f7e81;"></div><div style="left:439px;top:663px;width:1426px;height:72px;background:#fef9d1;"></div><div style="left:439px;top:735px;width:1426px;height:24px;background:#f2f1f4;"></div><div style="left:439px;top:663px;width:1px;height:96px;background:#ffffff;"></div><div style="left:439px;top:758px;width:1426px;height:1px;background:#fbfbfc;"></div><div class="t" style="left:69.0px;top:663px;width:260px;height:24px;line-height:24px;font-size:15px;color:#e1000b;font-weight:700;text-align:left;letter-spacing:0.45px;">Assorted</div><div class="t" style="left:68.5px;top:687px;width:260px;height:24px;line-height:24px;font-size:15px;color:#3a3a3a;font-weight:400;text-align:left;letter-spacing:0.6px;">Potential</div><div class="t" style="left:69.0px;top:711px;width:260px;height:24px;line-height:24px;font-size:15px;color:#3a3a3a;font-weight:400;text-align:left;letter-spacing:0.35px;">Weight Rows</div><div class="t" style="left:69.0px;top:735px;width:260px;height:24px;line-height:24px;font-size:15px;color:#3a3a3a;font-weight:400;text-align:left;letter-spacing:-0.5px;">ORDER QTY</div><div class="t" style="left:339px;top:663px;width:100px;height:24px;line-height:24px;font-size:13px;color:#e1000b;font-weight:700;text-align:center;">2</div><div class="t" style="left:339px;top:735px;width:100px;height:24px;line-height:24px;font-size:15px;color:#ffffff;font-weight:400;text-align:center;">54</div><div class="t" style="left:439px;top:663px;width:95px;height:24px;line-height:24px;font-size:13px;color:#e1000b;font-weight:700;text-align:center;">Yes</div><div class="t" style="left:439px;top:687px;width:95px;height:24px;line-height:24px;font-size:15px;color:#3a3a3a;font-weight:400;text-align:center;">Avg</div><div class="t" style="left:439px;top:711px;width:95px;height:24px;line-height:24px;font-size:15px;color:#3a3a3a;font-weight:400;text-align:center;">27</div><div class="t" style="left:439px;top:735px;width:95px;height:24px;line-height:24px;font-size:15px;color:#3a3a3a;font-weight:400;text-align:center;">27</div><div class="t" style="left:534px;top:663px;width:95px;height:24px;line-height:24px;font-size:13px;color:#e1000b;font-weight:700;text-align:center;">Yes</div><div class="t" style="left:534px;top:687px;width:95px;height:24px;line-height:24px;font-size:15px;color:#3a3a3a;font-weight:400;text-align:center;">Avg</div><div class="t" style="left:534px;top:711px;width:95px;height:24px;line-height:24px;font-size:15px;color:#3a3a3a;font-weight:400;text-align:center;">27</div><div class="t" style="left:534px;top:735px;width:95px;height:24px;line-height:24px;font-size:15px;color:#3a3a3a;font-weight:400;text-align:center;">27</div><div class="t" style="left:629px;top:711px;width:95px;height:24px;line-height:24px;font-size:15px;color:#3a3a3a;font-weight:400;text-align:center;">0</div><div class="t" style="left:629px;top:735px;width:95px;height:24px;line-height:24px;font-size:15px;color:#3a3a3a;font-weight:400;text-align:center;">0</div><div class="t" style="left:724px;top:711px;width:95px;height:24px;line-height:24px;font-size:15px;color:#3a3a3a;font-weight:400;text-align:center;">0</div><div class="t" style="left:724px;top:735px;width:95px;height:24px;line-height:24px;font-size:15px;color:#3a3a3a;font-weight:400;text-align:center;">0</div><div class="t" style="left:819px;top:711px;width:95px;height:24px;line-height:24px;font-size:15px;color:#3a3a3a;font-weight:400;text-align:center;">0</div><div class="t" style="left:819px;top:735px;width:95px;height:24px;line-height:24px;font-size:15px;color:#3a3a3a;font-weight:400;text-align:center;">0</div><div class="t" style="left:914px;top:711px;width:95px;height:24px;line-height:24px;font-size:15px;color:#3a3a3a;font-weight:400;text-align:center;">0</div><div class="t" style="left:914px;top:735px;width:95px;height:24px;line-height:24px;font-size:15px;color:#3a3a3a;font-weight:400;text-align:center;">0</div><div class="t" style="left:1009px;top:711px;width:95px;height:24px;line-height:24px;font-size:15px;color:#3a3a3a;font-weight:400;text-align:center;">0</div><div class="t" style="left:1009px;top:735px;width:95px;height:24px;line-height:24px;font-size:15px;color:#3a3a3a;font-weight:400;text-align:center;">0</div><div class="t" style="left:1104px;top:711px;width:95px;height:24px;line-height:24px;font-size:15px;color:#3a3a3a;font-weight:400;text-align:center;">0</div><div class="t" style="left:1104px;top:735px;width:95px;height:24px;line-height:24px;font-size:15px;color:#3a3a3a;font-weight:400;text-align:center;">0</div><div class="t" style="left:1199px;top:711px;width:95px;height:24px;line-height:24px;font-size:15px;color:#3a3a3a;font-weight:400;text-align:center;">0</div><div class="t" style="left:1199px;top:735px;width:95px;height:24px;line-height:24px;font-size:15px;color:#3a3a3a;font-weight:400;text-align:center;">0</div><div class="t" style="left:1294px;top:711px;width:95px;height:24px;line-height:24px;font-size:15px;color:#3a3a3a;font-weight:400;text-align:center;">0</div><div class="t" style="left:1294px;top:735px;width:95px;height:24px;line-height:24px;font-size:15px;color:#3a3a3a;font-weight:400;text-align:center;">0</div><div class="t" style="left:1389px;top:711px;width:95px;height:24px;line-height:24px;font-size:15px;color:#3a3a3a;font-weight:400;text-align:center;">0</div><div class="t" style="left:1389px;top:735px;width:95px;height:24px;line-height:24px;font-size:15px;color:#3a3a3a;font-weight:400;text-align:center;">0</div><div class="t" style="left:1484px;top:711px;width:95px;height:24px;line-height:24px;font-size:15px;color:#3a3a3a;font-weight:400;text-align:center;">0</div><div class="t" style="left:1484px;top:735px;width:95px;height:24px;line-height:24px;font-size:15px;color:#3a3a3a;font-weight:400;text-align:center;">0</div><div class="t" style="left:1579px;top:711px;width:95px;height:24px;line-height:24px;font-size:15px;color:#3a3a3a;font-weight:400;text-align:center;">0</div><div class="t" style="left:1579px;top:735px;width:95px;height:24px;line-height:24px;font-size:15px;color:#3a3a3a;font-weight:400;text-align:center;">0</div><div class="t" style="left:1674px;top:711px;width:95px;height:24px;line-height:24px;font-size:15px;color:#3a3a3a;font-weight:400;text-align:center;">0</div><div class="t" style="left:1674px;top:735px;width:95px;height:24px;line-height:24px;font-size:15px;color:#3a3a3a;font-weight:400;text-align:center;">0</div><div class="t" style="left:1769px;top:711px;width:95px;height:24px;line-height:24px;font-size:15px;color:#3a3a3a;font-weight:400;text-align:center;">0</div><div class="t" style="left:1769px;top:735px;width:95px;height:24px;line-height:24px;font-size:15px;color:#3a3a3a;font-weight:400;text-align:center;">0</div><div style="left:46px;top:759px;width:1819px;height:24px;background:#7f7e81;"></div><div class="t" style="left:52px;top:759px;width:300px;height:24px;line-height:24px;font-size:15px;color:#f4f4f4;font-weight:400;text-align:left;">-</div><div class="t" style="left:67.3px;top:759px;width:160px;height:24px;line-height:24px;font-size:15px;color:#fafafa;font-weight:400;text-align:left;letter-spacing:0.15px;">Model Seasonal : 101</div><div style="left:218.3px;top:765.5px;width:1.2px;height:3px;background:rgba(244,244,244,0.7);"></div><div style="left:46px;top:783px;width:293px;height:96px;background:#ffffff;"></div><div style="left:339px;top:783px;width:100px;height:96px;background:#7f7e81;"></div><div style="left:439px;top:783px;width:1426px;height:71px;background:#fef9d1;"></div><div style="left:439px;top:854px;width:1426px;height:25px;background:#f2f1f4;"></div><div style="left:439px;top:783px;width:1px;height:96px;background:#ffffff;"></div><div style="left:439px;top:878px;width:1426px;height:1px;background:#fbfbfc;"></div><div class="t" style="left:69.0px;top:783px;width:260px;height:24px;line-height:24px;font-size:15px;color:#e1000b;font-weight:700;text-align:left;letter-spacing:0.45px;">Assorted</div><div class="t" style="left:68.5px;top:807px;width:260px;height:24px;line-height:24px;font-size:15px;color:#3a3a3a;font-weight:400;text-align:left;letter-spacing:0.6px;">Potential</div><div class="t" style="left:69.0px;top:831px;width:260px;height:24px;line-height:24px;font-size:15px;color:#3a3a3a;font-weight:400;text-align:left;letter-spacing:0.35px;">Weight Rows</div><div class="t" style="left:69.0px;top:855px;width:260px;height:24px;line-height:24px;font-size:15px;color:#3a3a3a;font-weight:400;text-align:left;letter-spacing:-0.5px;">ORDER QTY</div><div class="t" style="left:339px;top:783px;width:100px;height:24px;line-height:24px;font-size:13px;color:#e1000b;font-weight:700;text-align:center;">2</div><div class="t" style="left:339px;top:855px;width:100px;height:24px;line-height:24px;font-size:15px;color:#ffffff;font-weight:400;text-align:center;">54</div><div class="t" style="left:439px;top:783px;width:95px;height:24px;line-height:24px;font-size:13px;color:#e1000b;font-weight:700;text-align:center;">Yes</div><div class="t" style="left:439px;top:807px;width:95px;height:24px;line-height:24px;font-size:15px;color:#3a3a3a;font-weight:400;text-align:center;">Avg</div><div class="t" style="left:439px;top:831px;width:95px;height:24px;line-height:24px;font-size:15px;color:#3a3a3a;font-weight:400;text-align:center;">27</div><div class="t" style="left:439px;top:855px;width:95px;height:24px;line-height:24px;font-size:15px;color:#3a3a3a;font-weight:400;text-align:center;">27</div><div class="t" style="left:534px;top:783px;width:95px;height:24px;line-height:24px;font-size:13px;color:#e1000b;font-weight:700;text-align:center;">Yes</div><div class="t" style="left:534px;top:807px;width:95px;height:24px;line-height:24px;font-size:15px;color:#3a3a3a;font-weight:400;text-align:center;">Avg</div><div class="t" style="left:534px;top:831px;width:95px;height:24px;line-height:24px;font-size:15px;color:#3a3a3a;font-weight:400;text-align:center;">27</div><div class="t" style="left:534px;top:855px;width:95px;height:24px;line-height:24px;font-size:15px;color:#3a3a3a;font-weight:400;text-align:center;">27</div><div class="t" style="left:629px;top:831px;width:95px;height:24px;line-height:24px;font-size:15px;color:#3a3a3a;font-weight:400;text-align:center;">0</div><div class="t" style="left:629px;top:855px;width:95px;height:24px;line-height:24px;font-size:15px;color:#3a3a3a;font-weight:400;text-align:center;">0</div><div class="t" style="left:724px;top:831px;width:95px;height:24px;line-height:24px;font-size:15px;color:#3a3a3a;font-weight:400;text-align:center;">0</div><div class="t" style="left:724px;top:855px;width:95px;height:24px;line-height:24px;font-size:15px;color:#3a3a3a;font-weight:400;text-align:center;">0</div><div class="t" style="left:819px;top:831px;width:95px;height:24px;line-height:24px;font-size:15px;color:#3a3a3a;font-weight:400;text-align:center;">0</div><div class="t" style="left:819px;top:855px;width:95px;height:24px;line-height:24px;font-size:15px;color:#3a3a3a;font-weight:400;text-align:center;">0</div><div class="t" style="left:914px;top:831px;width:95px;height:24px;line-height:24px;font-size:15px;color:#3a3a3a;font-weight:400;text-align:center;">0</div><div class="t" style="left:914px;top:855px;width:95px;height:24px;line-height:24px;font-size:15px;color:#3a3a3a;font-weight:400;text-align:center;">0</div><div class="t" style="left:1009px;top:831px;width:95px;height:24px;line-height:24px;font-size:15px;color:#3a3a3a;font-weight:400;text-align:center;">0</div><div class="t" style="left:1009px;top:855px;width:95px;height:24px;line-height:24px;font-size:15px;color:#3a3a3a;font-weight:400;text-align:center;">0</div><div class="t" style="left:1104px;top:831px;width:95px;height:24px;line-height:24px;font-size:15px;color:#3a3a3a;font-weight:400;text-align:center;">0</div><div class="t" style="left:1104px;top:855px;width:95px;height:24px;line-height:24px;font-size:15px;color:#3a3a3a;font-weight:400;text-align:center;">0</div><div class="t" style="left:1199px;top:831px;width:95px;height:24px;line-height:24px;font-size:15px;color:#3a3a3a;font-weight:400;text-align:center;">0</div><div class="t" style="left:1199px;top:855px;width:95px;height:24px;line-height:24px;font-size:15px;color:#3a3a3a;font-weight:400;text-align:center;">0</div><div class="t" style="left:1294px;top:831px;width:95px;height:24px;line-height:24px;font-size:15px;color:#3a3a3a;font-weight:400;text-align:center;">0</div><div class="t" style="left:1294px;top:855px;width:95px;height:24px;line-height:24px;font-size:15px;color:#3a3a3a;font-weight:400;text-align:center;">0</div><div class="t" style="left:1389px;top:831px;width:95px;height:24px;line-height:24px;font-size:15px;color:#3a3a3a;font-weight:400;text-align:center;">0</div><div class="t" style="left:1389px;top:855px;width:95px;height:24px;line-height:24px;font-size:15px;color:#3a3a3a;font-weight:400;text-align:center;">0</div><div class="t" style="left:1484px;top:831px;width:95px;height:24px;line-height:24px;font-size:15px;color:#3a3a3a;font-weight:400;text-align:center;">0</div><div class="t" style="left:1484px;top:855px;width:95px;height:24px;line-height:24px;font-size:15px;color:#3a3a3a;font-weight:400;text-align:center;">0</div><div class="t" style="left:1579px;top:831px;width:95px;height:24px;line-height:24px;font-size:15px;color:#3a3a3a;font-weight:400;text-align:center;">0</div><div class="t" style="left:1579px;top:855px;width:95px;height:24px;line-height:24px;font-size:15px;color:#3a3a3a;font-weight:400;text-align:center;">0</div><div class="t" style="left:1674px;top:831px;width:95px;height:24px;line-height:24px;font-size:15px;color:#3a3a3a;font-weight:400;text-align:center;">0</div><div class="t" style="left:1674px;top:855px;width:95px;height:24px;line-height:24px;font-size:15px;color:#3a3a3a;font-weight:400;text-align:center;">0</div><div class="t" style="left:1769px;top:831px;width:95px;height:24px;line-height:24px;font-size:15px;color:#3a3a3a;font-weight:400;text-align:center;">0</div><div class="t" style="left:1769px;top:855px;width:95px;height:24px;line-height:24px;font-size:15px;color:#3a3a3a;font-weight:400;text-align:center;">0</div><div style="left:46px;top:879px;width:1819px;height:24px;background:#7f7e81;"></div><div class="t" style="left:52px;top:879px;width:300px;height:24px;line-height:24px;font-size:15px;color:#f4f4f4;font-weight:400;text-align:left;">-</div><div class="t" style="left:67.3px;top:879px;width:160px;height:24px;line-height:24px;font-size:15px;color:#fafafa;font-weight:400;text-align:left;letter-spacing:0.15px;">Model Seasonal : 101</div><div style="left:218.3px;top:885.5px;width:1.2px;height:3px;background:rgba(244,244,244,0.7);"></div><div style="left:46px;top:903px;width:293px;height:96px;background:#ffffff;"></div><div style="left:339px;top:903px;width:100px;height:96px;background:#7f7e81;"></div><div style="left:439px;top:903px;width:1426px;height:71px;background:#fef9d1;"></div><div style="left:439px;top:974px;width:1426px;height:25px;background:#f2f1f4;"></div><div style="left:439px;top:903px;width:1px;height:96px;background:#ffffff;"></div><div style="left:439px;top:998px;width:1426px;height:1px;background:#fbfbfc;"></div><div class="t" style="left:69.0px;top:903px;width:260px;height:24px;line-height:24px;font-size:15px;color:#e1000b;font-weight:700;text-align:left;letter-spacing:0.45px;">Assorted</div><div class="t" style="left:68.5px;top:927px;width:260px;height:24px;line-height:24px;font-size:15px;color:#3a3a3a;font-weight:400;text-align:left;letter-spacing:0.6px;">Potential</div><div class="t" style="left:69.0px;top:951px;width:260px;height:24px;line-height:24px;font-size:15px;color:#3a3a3a;font-weight:400;text-align:left;letter-spacing:0.35px;">Weight Rows</div><div class="t" style="left:69.0px;top:975px;width:260px;height:24px;line-height:24px;font-size:15px;color:#3a3a3a;font-weight:400;text-align:left;letter-spacing:-0.5px;">ORDER QTY</div><div class="t" style="left:339px;top:903px;width:100px;height:24px;line-height:24px;font-size:13px;color:#e1000b;font-weight:700;text-align:center;">2</div><div class="t" style="left:339px;top:975px;width:100px;height:24px;line-height:24px;font-size:15px;color:#ffffff;font-weight:400;text-align:center;">54</div><div class="t" style="left:439px;top:903px;width:95px;height:24px;line-height:24px;font-size:13px;color:#e1000b;font-weight:700;text-align:center;">Yes</div><div class="t" style="left:439px;top:927px;width:95px;height:24px;line-height:24px;font-size:15px;color:#3a3a3a;font-weight:400;text-align:center;">Avg</div><div class="t" style="left:439px;top:951px;width:95px;height:24px;line-height:24px;font-size:15px;color:#3a3a3a;font-weight:400;text-align:center;">27</div><div class="t" style="left:439px;top:975px;width:95px;height:24px;line-height:24px;font-size:15px;color:#3a3a3a;font-weight:400;text-align:center;">27</div><div class="t" style="left:534px;top:903px;width:95px;height:24px;line-height:24px;font-size:13px;color:#e1000b;font-weight:700;text-align:center;">Yes</div><div class="t" style="left:534px;top:927px;width:95px;height:24px;line-height:24px;font-size:15px;color:#3a3a3a;font-weight:400;text-align:center;">Avg</div><div class="t" style="left:534px;top:951px;width:95px;height:24px;line-height:24px;font-size:15px;color:#3a3a3a;font-weight:400;text-align:center;">27</div><div class="t" style="left:534px;top:975px;width:95px;height:24px;line-height:24px;font-size:15px;color:#3a3a3a;font-weight:400;text-align:center;">27</div><div class="t" style="left:629px;top:951px;width:95px;height:24px;line-height:24px;font-size:15px;color:#3a3a3a;font-weight:400;text-align:center;">0</div><div class="t" style="left:629px;top:975px;width:95px;height:24px;line-height:24px;font-size:15px;color:#3a3a3a;font-weight:400;text-align:center;">0</div><div class="t" style="left:724px;top:951px;width:95px;height:24px;line-height:24px;font-size:15px;color:#3a3a3a;font-weight:400;text-align:center;">0</div><div class="t" style="left:724px;top:975px;width:95px;height:24px;line-height:24px;font-size:15px;color:#3a3a3a;font-weight:400;text-align:center;">0</div><div class="t" style="left:819px;top:951px;width:95px;height:24px;line-height:24px;font-size:15px;color:#3a3a3a;font-weight:400;text-align:center;">0</div><div class="t" style="left:819px;top:975px;width:95px;height:24px;line-height:24px;font-size:15px;color:#3a3a3a;font-weight:400;text-align:center;">0</div><div class="t" style="left:914px;top:951px;width:95px;height:24px;line-height:24px;font-size:15px;color:#3a3a3a;font-weight:400;text-align:center;">0</div><div class="t" style="left:914px;top:975px;width:95px;height:24px;line-height:24px;font-size:15px;color:#3a3a3a;font-weight:400;text-align:center;">0</div><div class="t" style="left:1009px;top:951px;width:95px;height:24px;line-height:24px;font-size:15px;color:#3a3a3a;font-weight:400;text-align:center;">0</div><div class="t" style="left:1009px;top:975px;width:95px;height:24px;line-height:24px;font-size:15px;color:#3a3a3a;font-weight:400;text-align:center;">0</div><div class="t" style="left:1104px;top:951px;width:95px;height:24px;line-height:24px;font-size:15px;color:#3a3a3a;font-weight:400;text-align:center;">0</div><div class="t" style="left:1104px;top:975px;width:95px;height:24px;line-height:24px;font-size:15px;color:#3a3a3a;font-weight:400;text-align:center;">0</div><div class="t" style="left:1199px;top:951px;width:95px;height:24px;line-height:24px;font-size:15px;color:#3a3a3a;font-weight:400;text-align:center;">0</div><div class="t" style="left:1199px;top:975px;width:95px;height:24px;line-height:24px;font-size:15px;color:#3a3a3a;font-weight:400;text-align:center;">0</div><div class="t" style="left:1294px;top:951px;width:95px;height:24px;line-height:24px;font-size:15px;color:#3a3a3a;font-weight:400;text-align:center;">0</div><div class="t" style="left:1294px;top:975px;width:95px;height:24px;line-height:24px;font-size:15px;color:#3a3a3a;font-weight:400;text-align:center;">0</div><div class="t" style="left:1389px;top:951px;width:95px;height:24px;line-height:24px;font-size:15px;color:#3a3a3a;font-weight:400;text-align:center;">0</div><div class="t" style="left:1389px;top:975px;width:95px;height:24px;line-height:24px;font-size:15px;color:#3a3a3a;font-weight:400;text-align:center;">0</div><div class="t" style="left:1484px;top:951px;width:95px;height:24px;line-height:24px;font-size:15px;color:#3a3a3a;font-weight:400;text-align:center;">0</div><div class="t" style="left:1484px;top:975px;width:95px;height:24px;line-height:24px;font-size:15px;color:#3a3a3a;font-weight:400;text-align:center;">0</div><div class="t" style="left:1579px;top:951px;width:95px;height:24px;line-height:24px;font-size:15px;color:#3a3a3a;font-weight:400;text-align:center;">0</div><div class="t" style="left:1579px;top:975px;width:95px;height:24px;line-height:24px;font-size:15px;color:#3a3a3a;font-weight:400;text-align:center;">0</div><div class="t" style="left:1674px;top:951px;width:95px;height:24px;line-height:24px;font-size:15px;color:#3a3a3a;font-weight:400;text-align:center;">0</div><div class="t" style="left:1674px;top:975px;width:95px;height:24px;line-height:24px;font-size:15px;color:#3a3a3a;font-weight:400;text-align:center;">0</div><div class="t" style="left:1769px;top:951px;width:95px;height:24px;line-height:24px;font-size:15px;color:#3a3a3a;font-weight:400;text-align:center;">0</div><div class="t" style="left:1769px;top:975px;width:95px;height:24px;line-height:24px;font-size:15px;color:#3a3a3a;font-weight:400;text-align:center;">0</div><div style="left:46px;top:999px;width:1819px;height:24px;background:#7f7e81;"></div><div class="t" style="left:52px;top:999px;width:300px;height:24px;line-height:24px;font-size:15px;color:#f4f4f4;font-weight:400;text-align:left;">-</div><div class="t" style="left:67.3px;top:999px;width:160px;height:24px;line-height:24px;font-size:15px;color:#fafafa;font-weight:400;text-align:left;letter-spacing:0.15px;">Model Seasonal : 101</div><div style="left:218.3px;top:1005.5px;width:1.2px;height:3px;background:rgba(244,244,244,0.7);"></div><div style="left:46px;top:1023px;width:293px;height:95px;background:#ffffff;"></div><div style="left:339px;top:1023px;width:100px;height:95px;background:#7f7e81;"></div><div style="left:439px;top:1023px;width:1426px;height:71px;background:#fef9d1;"></div><div style="left:439px;top:1094px;width:1426px;height:24px;background:#f2f1f4;"></div><div style="left:439px;top:1023px;width:1px;height:95px;background:#ffffff;"></div><div style="left:439px;top:1117px;width:1426px;height:1px;background:#fbfbfc;"></div><div class="t" style="left:69.0px;top:1023px;width:260px;height:24px;line-height:24px;font-size:15px;color:#e1000b;font-weight:700;text-align:left;letter-spacing:0.45px;">Assorted</div><div class="t" style="left:68.5px;top:1047px;width:260px;height:24px;line-height:24px;font-size:15px;color:#3a3a3a;font-weight:400;text-align:left;letter-spacing:0.6px;">Potential</div><div class="t" style="left:69.0px;top:1071px;width:260px;height:24px;line-height:24px;font-size:15px;color:#3a3a3a;font-weight:400;text-align:left;letter-spacing:0.35px;">Weight Rows</div><div class="t" style="left:69.0px;top:1095px;width:260px;height:24px;line-height:24px;font-size:15px;color:#3a3a3a;font-weight:400;text-align:left;letter-spacing:-0.5px;">ORDER QTY</div><div class="t" style="left:339px;top:1023px;width:100px;height:24px;line-height:24px;font-size:13px;color:#e1000b;font-weight:700;text-align:center;">2</div><div class="t" style="left:339px;top:1095px;width:100px;height:24px;line-height:24px;font-size:15px;color:#ffffff;font-weight:400;text-align:center;">54</div><div class="t" style="left:439px;top:1023px;width:95px;height:24px;line-height:24px;font-size:13px;color:#e1000b;font-weight:700;text-align:center;">Yes</div><div class="t" style="left:439px;top:1047px;width:95px;height:24px;line-height:24px;font-size:15px;color:#3a3a3a;font-weight:400;text-align:center;">Avg</div><div class="t" style="left:439px;top:1071px;width:95px;height:24px;line-height:24px;font-size:15px;color:#3a3a3a;font-weight:400;text-align:center;">27</div><div class="t" style="left:439px;top:1095px;width:95px;height:24px;line-height:24px;font-size:15px;color:#3a3a3a;font-weight:400;text-align:center;">27</div><div class="t" style="left:534px;top:1023px;width:95px;height:24px;line-height:24px;font-size:13px;color:#e1000b;font-weight:700;text-align:center;">Yes</div><div class="t" style="left:534px;top:1047px;width:95px;height:24px;line-height:24px;font-size:15px;color:#3a3a3a;font-weight:400;text-align:center;">Avg</div><div class="t" style="left:534px;top:1071px;width:95px;height:24px;line-height:24px;font-size:15px;color:#3a3a3a;font-weight:400;text-align:center;">27</div><div class="t" style="left:534px;top:1095px;width:95px;height:24px;line-height:24px;font-size:15px;color:#3a3a3a;font-weight:400;text-align:center;">27</div><div class="t" style="left:629px;top:1071px;width:95px;height:24px;line-height:24px;font-size:15px;color:#3a3a3a;font-weight:400;text-align:center;">0</div><div class="t" style="left:629px;top:1095px;width:95px;height:24px;line-height:24px;font-size:15px;color:#3a3a3a;font-weight:400;text-align:center;">0</div><div class="t" style="left:724px;top:1071px;width:95px;height:24px;line-height:24px;font-size:15px;color:#3a3a3a;font-weight:400;text-align:center;">0</div><div class="t" style="left:724px;top:1095px;width:95px;height:24px;line-height:24px;font-size:15px;color:#3a3a3a;font-weight:400;text-align:center;">0</div><div class="t" style="left:819px;top:1071px;width:95px;height:24px;line-height:24px;font-size:15px;color:#3a3a3a;font-weight:400;text-align:center;">0</div><div class="t" style="left:819px;top:1095px;width:95px;height:24px;line-height:24px;font-size:15px;color:#3a3a3a;font-weight:400;text-align:center;">0</div><div class="t" style="left:914px;top:1071px;width:95px;height:24px;line-height:24px;font-size:15px;color:#3a3a3a;font-weight:400;text-align:center;">0</div><div class="t" style="left:914px;top:1095px;width:95px;height:24px;line-height:24px;font-size:15px;color:#3a3a3a;font-weight:400;text-align:center;">0</div><div class="t" style="left:1009px;top:1071px;width:95px;height:24px;line-height:24px;font-size:15px;color:#3a3a3a;font-weight:400;text-align:center;">0</div><div class="t" style="left:1009px;top:1095px;width:95px;height:24px;line-height:24px;font-size:15px;color:#3a3a3a;font-weight:400;text-align:center;">0</div><div class="t" style="left:1104px;top:1071px;width:95px;height:24px;line-height:24px;font-size:15px;color:#3a3a3a;font-weight:400;text-align:center;">0</div><div class="t" style="left:1104px;top:1095px;width:95px;height:24px;line-height:24px;font-size:15px;color:#3a3a3a;font-weight:400;text-align:center;">0</div><div class="t" style="left:1199px;top:1071px;width:95px;height:24px;line-height:24px;font-size:15px;color:#3a3a3a;font-weight:400;text-align:center;">0</div><div class="t" style="left:1199px;top:1095px;width:95px;height:24px;line-height:24px;font-size:15px;color:#3a3a3a;font-weight:400;text-align:center;">0</div><div class="t" style="left:1294px;top:1071px;width:95px;height:24px;line-height:24px;font-size:15px;color:#3a3a3a;font-weight:400;text-align:center;">0</div><div class="t" style="left:1294px;top:1095px;width:95px;height:24px;line-height:24px;font-size:15px;color:#3a3a3a;font-weight:400;text-align:center;">0</div><div class="t" style="left:1389px;top:1071px;width:95px;height:24px;line-height:24px;font-size:15px;color:#3a3a3a;font-weight:400;text-align:center;">0</div><div class="t" style="left:1389px;top:1095px;width:95px;height:24px;line-height:24px;font-size:15px;color:#3a3a3a;font-weight:400;text-align:center;">0</div><div class="t" style="left:1484px;top:1071px;width:95px;height:24px;line-height:24px;font-size:15px;color:#3a3a3a;font-weight:400;text-align:center;">0</div><div class="t" style="left:1484px;top:1095px;width:95px;height:24px;line-height:24px;font-size:15px;color:#3a3a3a;font-weight:400;text-align:center;">0</div><div class="t" style="left:1579px;top:1071px;width:95px;height:24px;line-height:24px;font-size:15px;color:#3a3a3a;font-weight:400;text-align:center;">0</div><div class="t" style="left:1579px;top:1095px;width:95px;height:24px;line-height:24px;font-size:15px;color:#3a3a3a;font-weight:400;text-align:center;">0</div><div class="t" style="left:1674px;top:1071px;width:95px;height:24px;line-height:24px;font-size:15px;color:#3a3a3a;font-weight:400;text-align:center;">0</div><div class="t" style="left:1674px;top:1095px;width:95px;height:24px;line-height:24px;font-size:15px;color:#3a3a3a;font-weight:400;text-align:center;">0</div><div class="t" style="left:1769px;top:1071px;width:95px;height:24px;line-height:24px;font-size:15px;color:#3a3a3a;font-weight:400;text-align:center;">0</div><div class="t" style="left:1769px;top:1095px;width:95px;height:24px;line-height:24px;font-size:15px;color:#3a3a3a;font-weight:400;text-align:center;">0</div><svg style="left:1885px;top:355px" width="20" height="48" viewBox="1885 355 20 48"><path d="M1889 363.7 L1894 358 L1899 363.7 Z" fill="#c3dfee"/><rect x="1890" y="374" width="7.8" height="24" rx="3" fill="#d4d3d6"/></svg>
</body></html>
